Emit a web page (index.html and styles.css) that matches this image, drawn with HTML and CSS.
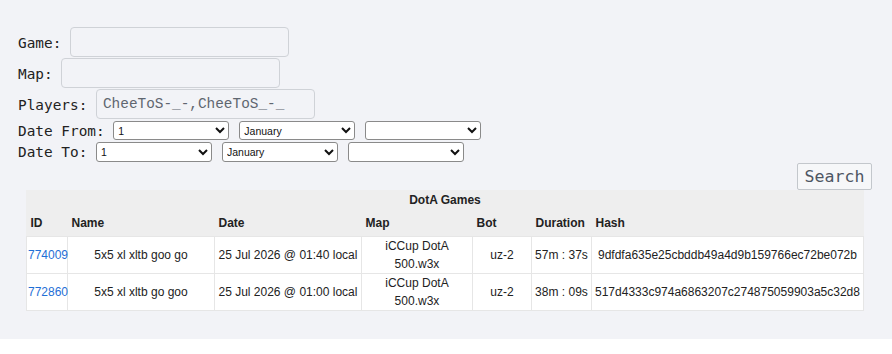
FILE: index.html
```html
<!DOCTYPE html>
<html lang="en">
<head>
<meta charset="utf-8">
<title>DotA Games</title>
<link rel="stylesheet" href="styles.css">
</head>
<body>
<div class="page">
  <form class="filters">
    <div class="row row-input"><span class="lbl">Game:</span><input class="text game" type="text"></div>
    <div class="row row-input"><span class="lbl">Map:</span><input class="text" type="text"></div>
    <div class="row row-input"><span class="lbl">Players:</span><input class="text" type="text" value="CheeToS-_-,CheeToS_-_"></div>
    <div class="row row-date">
      <span class="lbl">Date From:</span>
      <div class="selects">
        <select class="sel"><option>1</option></select>
        <select class="sel"><option>January</option></select>
        <select class="sel"><option></option></select>
      </div>
    </div>
    <div class="row row-date row-to">
      <span class="lbl">Date To:</span>
      <div class="selects">
        <select class="sel"><option>1</option></select>
        <select class="sel"><option>January</option></select>
        <select class="sel"><option></option></select>
      </div>
    </div>
    <div class="actions"><button type="button" class="search">Search</button></div>
  </form>
  <table class="games">
    <colgroup>
      <col class="c-id"><col class="c-name"><col class="c-date"><col class="c-map"><col class="c-bot"><col class="c-dur"><col class="c-hash">
    </colgroup>
    <thead>
      <tr class="cap"><th colspan="7">DotA Games</th></tr>
      <tr class="heads"><th>ID</th><th>Name</th><th>Date</th><th>Map</th><th>Bot</th><th>Duration</th><th>Hash</th></tr>
    </thead>
    <tbody>
      <tr>
        <td class="id"><a href="#">774009</a></td>
        <td>5x5 xl xltb goo go</td>
        <td>25 Jul 2026 @ 01:40 local</td>
        <td>iCCup DotA 500.w3x</td>
        <td>uz-2</td>
        <td>57m : 37s</td>
        <td>9dfdfa635e25cbddb49a4d9b159766ec72be072b</td>
      </tr>
      <tr>
        <td class="id"><a href="#">772860</a></td>
        <td>5x5 xl xltb go goo</td>
        <td>25 Jul 2026 @ 01:00 local</td>
        <td>iCCup DotA 500.w3x</td>
        <td>uz-2</td>
        <td>38m : 09s</td>
        <td>517d4333c974a6863207c274875059903a5c32d8</td>
      </tr>
    </tbody>
  </table>
</div>
</body>
</html>
```
FILE: styles.css
```css
html, body {
  margin: 0;
  padding: 0;
  background: #ffffff;
}

.page {
  background: #f2f3f7;
  padding: 27px 20px 28px 18px;
  font-family: "DejaVu Sans Mono", "Liberation Mono", monospace;
  font-size: 14.4px;
  color: #222;
}

.filters {
  margin: 0;
}

.row {
  display: flex;
  align-items: center;
  gap: 1ch;
}

.row-input {
  height: 31px;
}

.row-date {
  height: 21px;
}

.lbl {
  white-space: pre;
}

.text {
  box-sizing: border-box;
  width: 219px;
  height: 30px;
  margin: 0;
  padding: 0 6px;
  border: 1px solid #cfd2d7;
  border-radius: 4px;
  background: #f2f3f7;
  font-family: "Liberation Mono", "DejaVu Sans Mono", monospace;
  font-size: 14.4px;
  color: #5f6670;
  align-self: flex-start;
}

.selects {
  display: flex;
  gap: 10px;
}

.sel {
  box-sizing: border-box;
  width: 116px;
  height: 19px;
  margin: 0;
  font-family: "Liberation Sans", Arial, sans-serif;
  font-size: 10.5px;
  color: #111;
  background: #ffffff;
  border: 1px solid #8a8a8a;
  border-radius: 3px;
}

.row-to .sel {
  height: 20px;
}

.actions {
  display: flex;
  justify-content: flex-end;
  padding-top: 1px;
}

.search {
  box-sizing: border-box;
  width: 75px;
  height: 27px;
  margin: 0;
  padding: 0;
  border: 1px solid #c3c7cc;
  border-radius: 2px;
  background: #f6f7f9;
  font-family: "DejaVu Sans Mono", "Liberation Mono", monospace;
  font-size: 16.6px;
  color: #4e5663;
}

.games {
  width: 837px;
  margin: 0 auto;
  table-layout: fixed;
  border-collapse: collapse;
  font-family: "Liberation Sans", Arial, sans-serif;
  font-size: 12px;
  color: #222;
  background: #eeeeee;
}

.c-id { width: 41px; }
.c-name { width: 147px; }
.c-date { width: 147px; }
.c-map { width: 111px; }
.c-bot { width: 59px; }
.c-dur { width: 60px; }
.c-hash { width: 272px; }

.games th {
  font-weight: bold;
  text-align: left;
  padding: 0 4px;
  background: #eeeeee;
  white-space: nowrap;
}

.games .cap th {
  text-align: center;
  height: 20px;
  padding: 0;
}

.games .heads th {
  height: 26px;
}

.games td {
  background: #ffffff;
  border: 1px solid #e6e6e6;
  text-align: center;
  line-height: 18px;
  padding: 0 1px;
  white-space: normal;
}

.games td.id {
  text-align: left;
}

.games a {
  color: #1f6fd6;
  text-decoration: none;
}
```
